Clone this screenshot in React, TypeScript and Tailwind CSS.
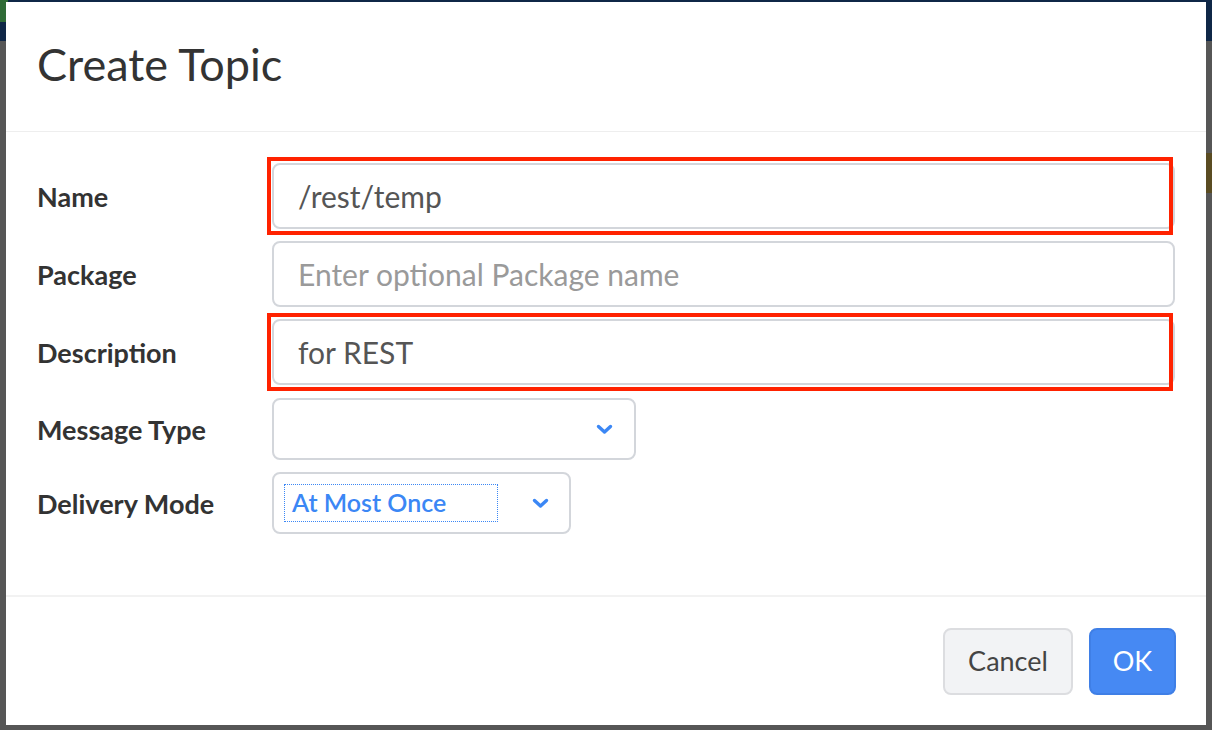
import React from 'react';

const Chevron: React.FC = () => (
  <svg width="17" height="11" viewBox="0 0 17 11" className="shrink-0">
    <path d="M2.5 2.5 L8.5 8 L14.5 2.5" fill="none" stroke="#3b87f5" strokeWidth="3.4" strokeLinecap="round" strokeLinejoin="round" />
  </svg>
);

const App: React.FC = () => {
  const font = { fontFamily: 'Lato, "Noto Sans", sans-serif' };

  const rows = [
    { label: 'Name', value: '/rest/temp', highlight: true },
    { label: 'Package', placeholder: 'Enter optional Package name', highlight: false },
    { label: 'Description', value: 'for REST', highlight: true },
  ];

  return (
    <div className="relative w-[1212px] h-[730px] overflow-hidden bg-[#565656]" style={font}>
      {/* dimmed page behind the dialog */}
      <div className="flex h-[41px] bg-[#0f2747]">
        <div className="w-[8px] h-[22px] bg-[#2f6b36]" />
      </div>
      <div className="flex justify-end mt-[112px]">
        <div className="w-[8px] h-[40px] bg-[#5a4c22]" />
      </div>

      <div className="absolute left-[6px] top-[2px] w-[1200px] h-[723px] bg-white flex flex-col">
        <div className="h-[130px] flex items-center px-[31px] border-b border-[#eeeeee]">
          <h4 className="text-[45px] text-[#333333] font-normal leading-none pb-[4px]">Create Topic</h4>
        </div>

        <div className="flex-1 px-[31px] pt-[31px] flex flex-col">
          {rows.map((row) => (
            <div key={row.label} className="flex items-center mb-[12px]">
              <label className="w-[235px] shrink-0 text-[27px] font-bold text-[#333333] pt-[3px]">{row.label}</label>
              <div className="relative flex-1">
                <div className="h-[66px] border-2 border-[#d3d6db] rounded-[8px] flex items-center pl-[24px] text-[30px]">
                  {row.value ? (
                    <span className="text-[#555555]">{row.value}</span>
                  ) : (
                    <span className="text-[#9a9a9a]">{row.placeholder}</span>
                  )}
                </div>
                {row.highlight && (
                  <div className="absolute left-[-5px] right-[2px] top-[-6px] bottom-[-6px] border-[4px] border-[#ff2200] pointer-events-none" />
                )}
              </div>
            </div>
          ))}

          <div className="flex items-center mb-[12px] mt-[1px]">
            <label className="w-[235px] shrink-0 text-[27px] font-bold text-[#333333] pt-[3px]">Message Type</label>
            <div className="w-[364px] h-[62px] border-2 border-[#d3d6db] rounded-[8px] flex items-center justify-end pr-[21px]">
              <Chevron />
            </div>
          </div>

          <div className="flex items-center">
            <label className="w-[235px] shrink-0 text-[27px] font-bold text-[#333333] pt-[3px]">Delivery Mode</label>
            <div className="w-[299px] h-[62px] border-2 border-[#d3d6db] rounded-[8px] flex items-center pl-[10px] pr-[20px]">
              <div className="w-[214px] h-[38px] border border-dotted border-[#3b87f5] flex items-center pl-[7px] text-[25px] text-[#3b87f5] font-semibold">
                At Most Once
              </div>
              <div className="flex-1" />
              <Chevron />
            </div>
          </div>
        </div>

        <div className="h-[130px] border-t-2 border-[#f2f2f2] flex items-center justify-end gap-[16px] px-[30px]">
          <button className="w-[130px] h-[67px] rounded-[8px] bg-[#f2f3f5] border-2 border-[#dcdde0] text-[27px] text-[#444444]">
            Cancel
          </button>
          <button className="w-[87px] h-[67px] rounded-[8px] bg-[#4689f3] border-2 border-[#3f7fe6] text-[27px] text-white">
            OK
          </button>
        </div>
      </div>
    </div>
  );
};

export default App;
